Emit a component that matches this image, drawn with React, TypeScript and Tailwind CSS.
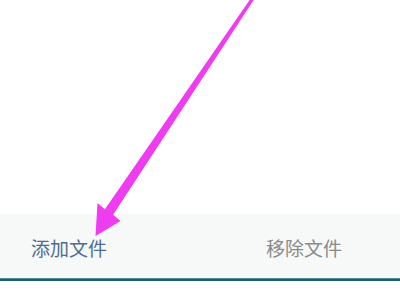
export default function App() {
  return (
    <div className="relative w-[400px] h-[300px] bg-white overflow-hidden" style={{ fontFamily: '"Noto Sans CJK SC", "Noto Sans", sans-serif' }}>
      <div className="h-[214px] bg-white" />
      <div className="h-[64px] bg-[#f7f8f8] grid grid-cols-2 items-center">
        <div className="pl-[31px] pt-[2px] text-[19px] leading-none text-[#4d6d92]">添加文件</div>
        <div className="pl-[66px] pt-[2px] text-[19px] leading-none text-[#8a8a8a]">移除文件</div>
      </div>
      <div className="h-[1px] bg-[#4f8f9a]" />
      <div className="h-[2px] bg-[#1f5d6c]" />
      <div className="h-[19px] bg-white" />
      <svg className="absolute left-0 top-0" width="400" height="300" viewBox="0 0 400 300">
        <polygon
          points="251,-2 104.9,209.2 97.5,203 95.5,236 120.5,221 113.1,214.8 255,-2"
          fill="#f03cf0"
        />
      </svg>
    </div>
  );
}
